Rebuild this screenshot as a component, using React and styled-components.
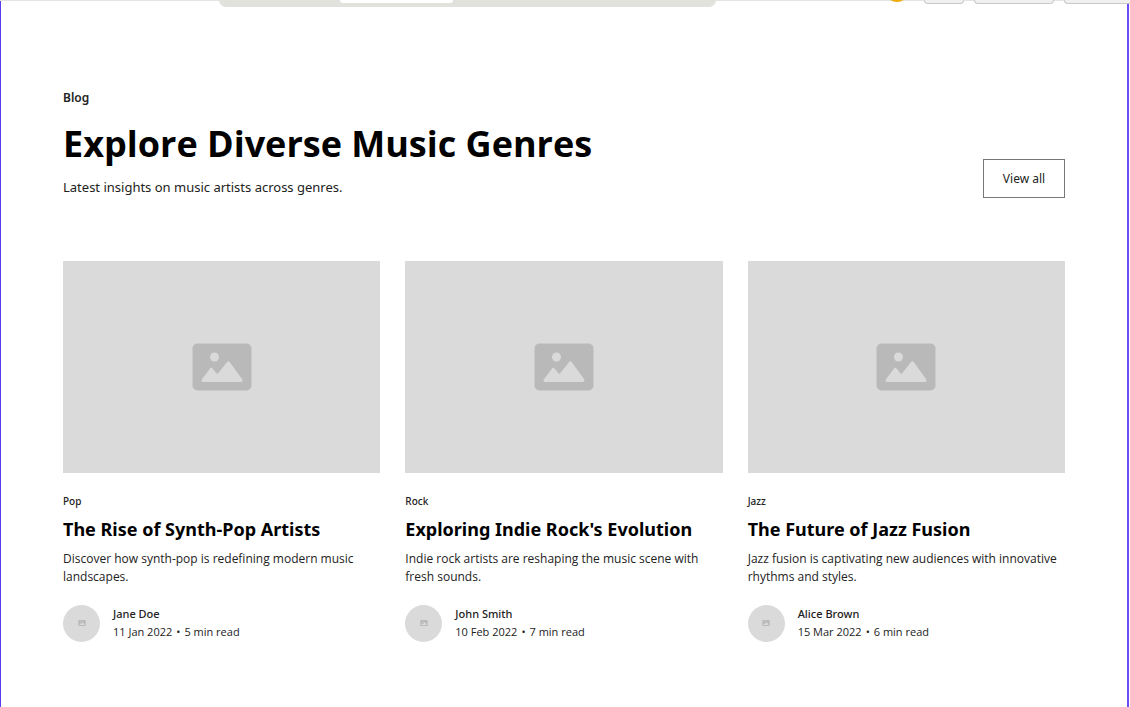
import React from "react";
import styled, { createGlobalStyle } from "styled-components";

const GlobalStyle = createGlobalStyle`
  *, *::before, *::after { box-sizing: border-box; }
  body {
    margin: 0;
    background: #fff;
    color: #222;
    font-family: "Noto Sans", "Open Sans", sans-serif;
  }
  h1, h2, p { margin: 0; }
`;

const Page = styled.div`
  position: relative;
  min-height: 100vh;
  display: flex;
  overflow: hidden;
`;

const Toolbar = styled.div`
  position: absolute;
  top: 0;
  left: 0;
  right: 0;
  height: 7px;
  border-top: 1px solid #e4e4e4;
`;

const TabStrip = styled.div`
  position: absolute;
  top: -1px;
  left: 219px;
  width: 497px;
  height: 7px;
  padding-left: 121px;
  background: #e2e2dd;
  border-radius: 0 0 7px 7px;
`;

const ActiveTab = styled.div`
  width: 113px;
  height: 3px;
  background: #fff;
  border-radius: 0 0 5px 5px;
`;

const ToolbarActions = styled.div`
  position: absolute;
  top: -1px;
  right: -14px;
  display: flex;
  gap: 10px;
`;

const ToolbarChip = styled.div`
  width: ${({ $width }) => $width}px;
  height: 4px;
  background: #f1f0ef;
  border: 1px solid #c8c8c8;
  border-top: 0;
  border-radius: 0 0 6px 6px;
`;

const UserBadge = styled.div`
  width: 24px;
  height: 24px;
  margin: -22px 5px 0 0;
  background: #efab0c;
  border-radius: 50%;
`;

const Frame = styled.main`
  flex: 1;
  margin-right: 1px;
  padding: 88px 62px 64px;
  border-left: 1px solid #5b3cf5;
  border-right: 2px solid #6c4cf5;
`;

const Header = styled.header`
  display: flex;
  justify-content: space-between;
  align-items: flex-end;
  margin-bottom: 63px;
`;

const Eyebrow = styled.p`
  font-size: 12px;
  line-height: 20px;
  font-weight: 600;
`;

const Title = styled.h1`
  margin: 13px 0 10px;
  color: #000;
  font-family: "Open Sans", "Noto Sans", sans-serif;
  font-size: 36px;
  line-height: 46px;
  font-weight: 660;
`;

const Lead = styled.p`
  font-size: 13px;
  line-height: 21px;
`;

const ViewAll = styled.button`
  width: 82px;
  height: 39px;
  padding: 0;
  background: #fff;
  border: 1px solid #777;
  color: #222;
  font: 400 12px/18px "Noto Sans", "Open Sans", sans-serif;
`;

const Grid = styled.div`
  display: grid;
  grid-template-columns: repeat(3, minmax(0, 1fr));
  gap: 25px;
`;

const Cover = styled.div`
  display: flex;
  align-items: center;
  justify-content: center;
  aspect-ratio: 3 / 2;
  margin-bottom: 20px;
  background: #dadada;
`;

const Category = styled.p`
  font-size: 10px;
  line-height: 16px;
  font-weight: 500;
`;

const CardTitle = styled.h2`
  margin: 7px 0 8px;
  color: #000;
  font-size: 18px;
  line-height: 26px;
  font-weight: 700;
`;

const Summary = styled.p`
  font-family: "Open Sans", "Noto Sans", sans-serif;
  font-size: 12px;
  line-height: 18px;
`;

const Author = styled.div`
  display: flex;
  align-items: center;
  gap: 13px;
  margin-top: 19px;
`;

const Avatar = styled.div`
  display: flex;
  align-items: center;
  justify-content: center;
  width: 37px;
  height: 37px;
  background: #dadada;
  border-radius: 50%;
`;

const AuthorName = styled.p`
  font-size: 11px;
  line-height: 18px;
  font-weight: 500;
`;

const Meta = styled.p`
  display: flex;
  gap: 4px;
  font-family: "Open Sans", "Noto Sans", sans-serif;
  font-size: 11px;
  line-height: 18px;
`;

const Placeholder = ({ width, height }) => (
  <svg width={width} height={height} viewBox="0 0 60 48" aria-hidden="true">
    <rect x="0.5" y="0.5" width="59" height="47" rx="5" fill="#b9b9b9" />
    <circle cx="22.5" cy="14" r="4.5" fill="#dadada" />
    <path
      d="M9.8 36.5 18.2 25.3Q19.2 24 20.3 25.3L25.3 31.2 35.3 18.8Q36.4 17.5 37.5 18.8L50.2 36.2Q51 39 48.5 39H11.2Q8.8 38.8 9.8 36.5Z"
      fill="#dadada"
    />
  </svg>
);

const posts = [
  {
    category: "Pop",
    title: "The Rise of Synth-Pop Artists",
    summary: "Discover how synth-pop is redefining modern music landscapes.",
    author: "Jane Doe",
    date: "11 Jan 2022",
    time: "5 min read",
  },
  {
    category: "Rock",
    title: "Exploring Indie Rock's Evolution",
    summary: "Indie rock artists are reshaping the music scene with fresh sounds.",
    author: "John Smith",
    date: "10 Feb 2022",
    time: "7 min read",
  },
  {
    category: "Jazz",
    title: "The Future of Jazz Fusion",
    summary: "Jazz fusion is captivating new audiences with innovative rhythms and styles.",
    author: "Alice Brown",
    date: "15 Mar 2022",
    time: "6 min read",
  },
];

export default function App() {
  return (
    <Page>
      <GlobalStyle />
      <Frame>
        <Header>
          <div>
            <Eyebrow>Blog</Eyebrow>
            <Title>Explore Diverse Music Genres</Title>
            <Lead>Latest insights on music artists across genres.</Lead>
          </div>
          <ViewAll type="button">View all</ViewAll>
        </Header>
        <Grid>
          {posts.map((post) => (
            <article key={post.title}>
              <Cover>
                <Placeholder width={60} height={48} />
              </Cover>
              <Category>{post.category}</Category>
              <CardTitle>{post.title}</CardTitle>
              <Summary>{post.summary}</Summary>
              <Author>
                <Avatar>
                  <Placeholder width={8} height={6} />
                </Avatar>
                <div>
                  <AuthorName>{post.author}</AuthorName>
                  <Meta>
                    <span>{post.date}</span>
                    <span>•</span>
                    <span>{post.time}</span>
                  </Meta>
                </div>
              </Author>
            </article>
          ))}
        </Grid>
      </Frame>
      <Toolbar>
        <TabStrip>
          <ActiveTab />
        </TabStrip>
        <ToolbarActions>
          <UserBadge />
          <ToolbarChip $width={40} />
          <ToolbarChip $width={80} />
          <ToolbarChip $width={80} />
        </ToolbarActions>
      </Toolbar>
    </Page>
  );
}
